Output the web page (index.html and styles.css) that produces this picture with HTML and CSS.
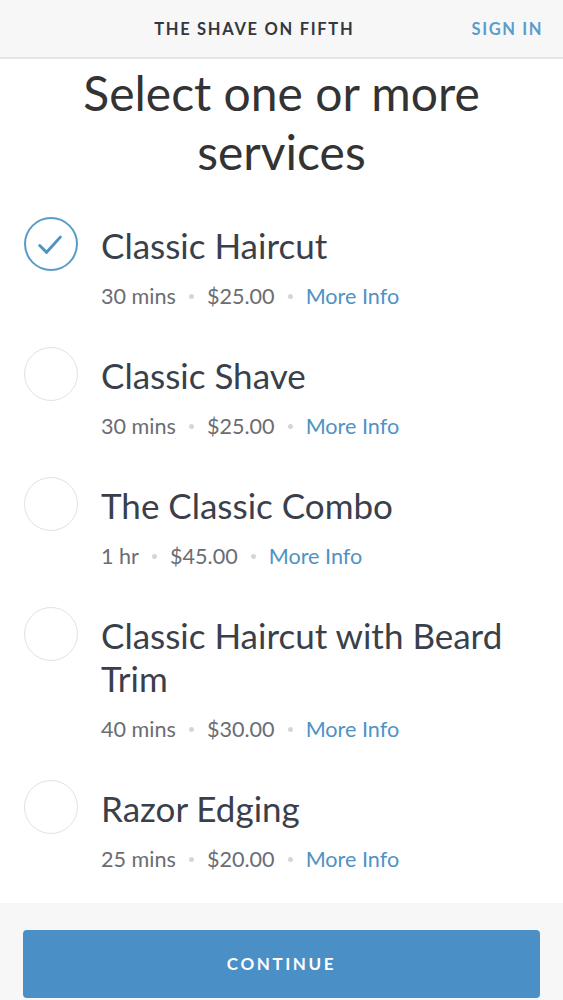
FILE: index.html
```html
<!DOCTYPE html>
<html lang="en">
<head>
<meta charset="utf-8">
<title>The Shave on Fifth – Select services</title>
<link rel="stylesheet" href="styles.css">
</head>
<body>
<header class="topbar">
  <div class="brand">THE SHAVE ON FIFTH</div>
  <a class="signin" href="#">SIGN IN</a>
</header>
<main class="content">
  <h1 class="heading">Select one or more services</h1>
  <ul class="services">
    <li class="service">
      <span class="check checked">
        <svg viewBox="0 0 54 54" width="54" height="54"><path d="M15 28.5 L22 35.5 L36 20" fill="none" stroke="#4f93c4" stroke-width="3" stroke-linecap="round" stroke-linejoin="round"/></svg>
      </span>
      <div class="info">
        <div class="name">Classic Haircut</div>
        <div class="meta"><span>30 mins</span><i class="dot"></i><span>$25.00</span><i class="dot"></i><a href="#">More Info</a></div>
      </div>
    </li>
    <li class="service">
      <span class="check"></span>
      <div class="info">
        <div class="name">Classic Shave</div>
        <div class="meta"><span>30 mins</span><i class="dot"></i><span>$25.00</span><i class="dot"></i><a href="#">More Info</a></div>
      </div>
    </li>
    <li class="service">
      <span class="check"></span>
      <div class="info">
        <div class="name">The Classic Combo</div>
        <div class="meta"><span>1 hr</span><i class="dot"></i><span>$45.00</span><i class="dot"></i><a href="#">More Info</a></div>
      </div>
    </li>
    <li class="service">
      <span class="check"></span>
      <div class="info">
        <div class="name">Classic Haircut with Beard Trim</div>
        <div class="meta"><span>40 mins</span><i class="dot"></i><span>$30.00</span><i class="dot"></i><a href="#">More Info</a></div>
      </div>
    </li>
    <li class="service">
      <span class="check"></span>
      <div class="info">
        <div class="name">Razor Edging</div>
        <div class="meta"><span>25 mins</span><i class="dot"></i><span>$20.00</span><i class="dot"></i><a href="#">More Info</a></div>
      </div>
    </li>
  </ul>
</main>
<footer class="footer">
  <button class="continue" type="button">CONTINUE</button>
</footer>
</body>
</html>
```
FILE: styles.css
```css
* { box-sizing: border-box; }
html, body { margin: 0; padding: 0; }
body {
  font-family: Lato, "Open Sans", "Liberation Sans", sans-serif;
  background: #fff;
  color: #373c48;
  width: 563px;
  overflow: hidden;
}
.topbar {
  height: 59px;
  background: #f7f7f8;
  border-bottom: 2px solid #e6e6e8;
  display: flex;
  align-items: center;
  padding: 0 20px 0 57px;
}
.brand {
  flex: 1;
  text-align: center;
  font-size: 16.5px;
  font-weight: 700;
  letter-spacing: 1.7px;
  color: #333740;
}
.signin {
  margin-left: 20px;
  font-size: 16.5px;
  font-weight: 700;
  letter-spacing: 1.6px;
  color: #5a9dca;
  text-decoration: none;
}
.content { padding: 0 24px; }
.heading {
  margin: 4px auto 43px;
  width: 420px;
  text-align: center;
  font-size: 48px;
  font-weight: 400;
  line-height: 59px;
  color: #333;
}
.services { list-style: none; margin: 0; padding: 0; }
.service {
  display: flex;
  align-items: flex-start;
  gap: 23px;
  margin-bottom: 44.5px;
}
.check {
  flex: none;
  width: 54px;
  height: 54px;
  margin-top: -7.5px;
  border-radius: 50%;
  border: 1.5px solid #e2e2e2;
  display: flex;
  align-items: center;
  justify-content: center;
}
.check svg { display: block; margin: -1.5px; }
.check.checked { border: 2px solid #5a9cc8; }
.info { flex: 1; min-width: 0; }
.name {
  font-size: 35px;
  line-height: 43px;
  color: #3a3f4c;
}
.meta {
  margin-top: 14.5px;
  display: flex;
  align-items: center;
  font-size: 21.6px;
  line-height: 28px;
  color: #6b6d72;
}
.meta a { color: #4f93c4; text-decoration: none; }
.dot {
  width: 5px;
  height: 5px;
  border-radius: 50%;
  background: #d6d6d8;
  margin: 2px 13px 0;
}
.footer {
  margin-top: -14.5px;
  background: #f7f7f8;
  padding: 27px 23px 2px;
}
.continue {
  display: block;
  width: 100%;
  height: 68px;
  border: 0;
  border-radius: 4px;
  background: #4a90c6;
  color: #fff;
  font-family: inherit;
  font-size: 17px;
  font-weight: 700;
  letter-spacing: 2.6px;
}
```
